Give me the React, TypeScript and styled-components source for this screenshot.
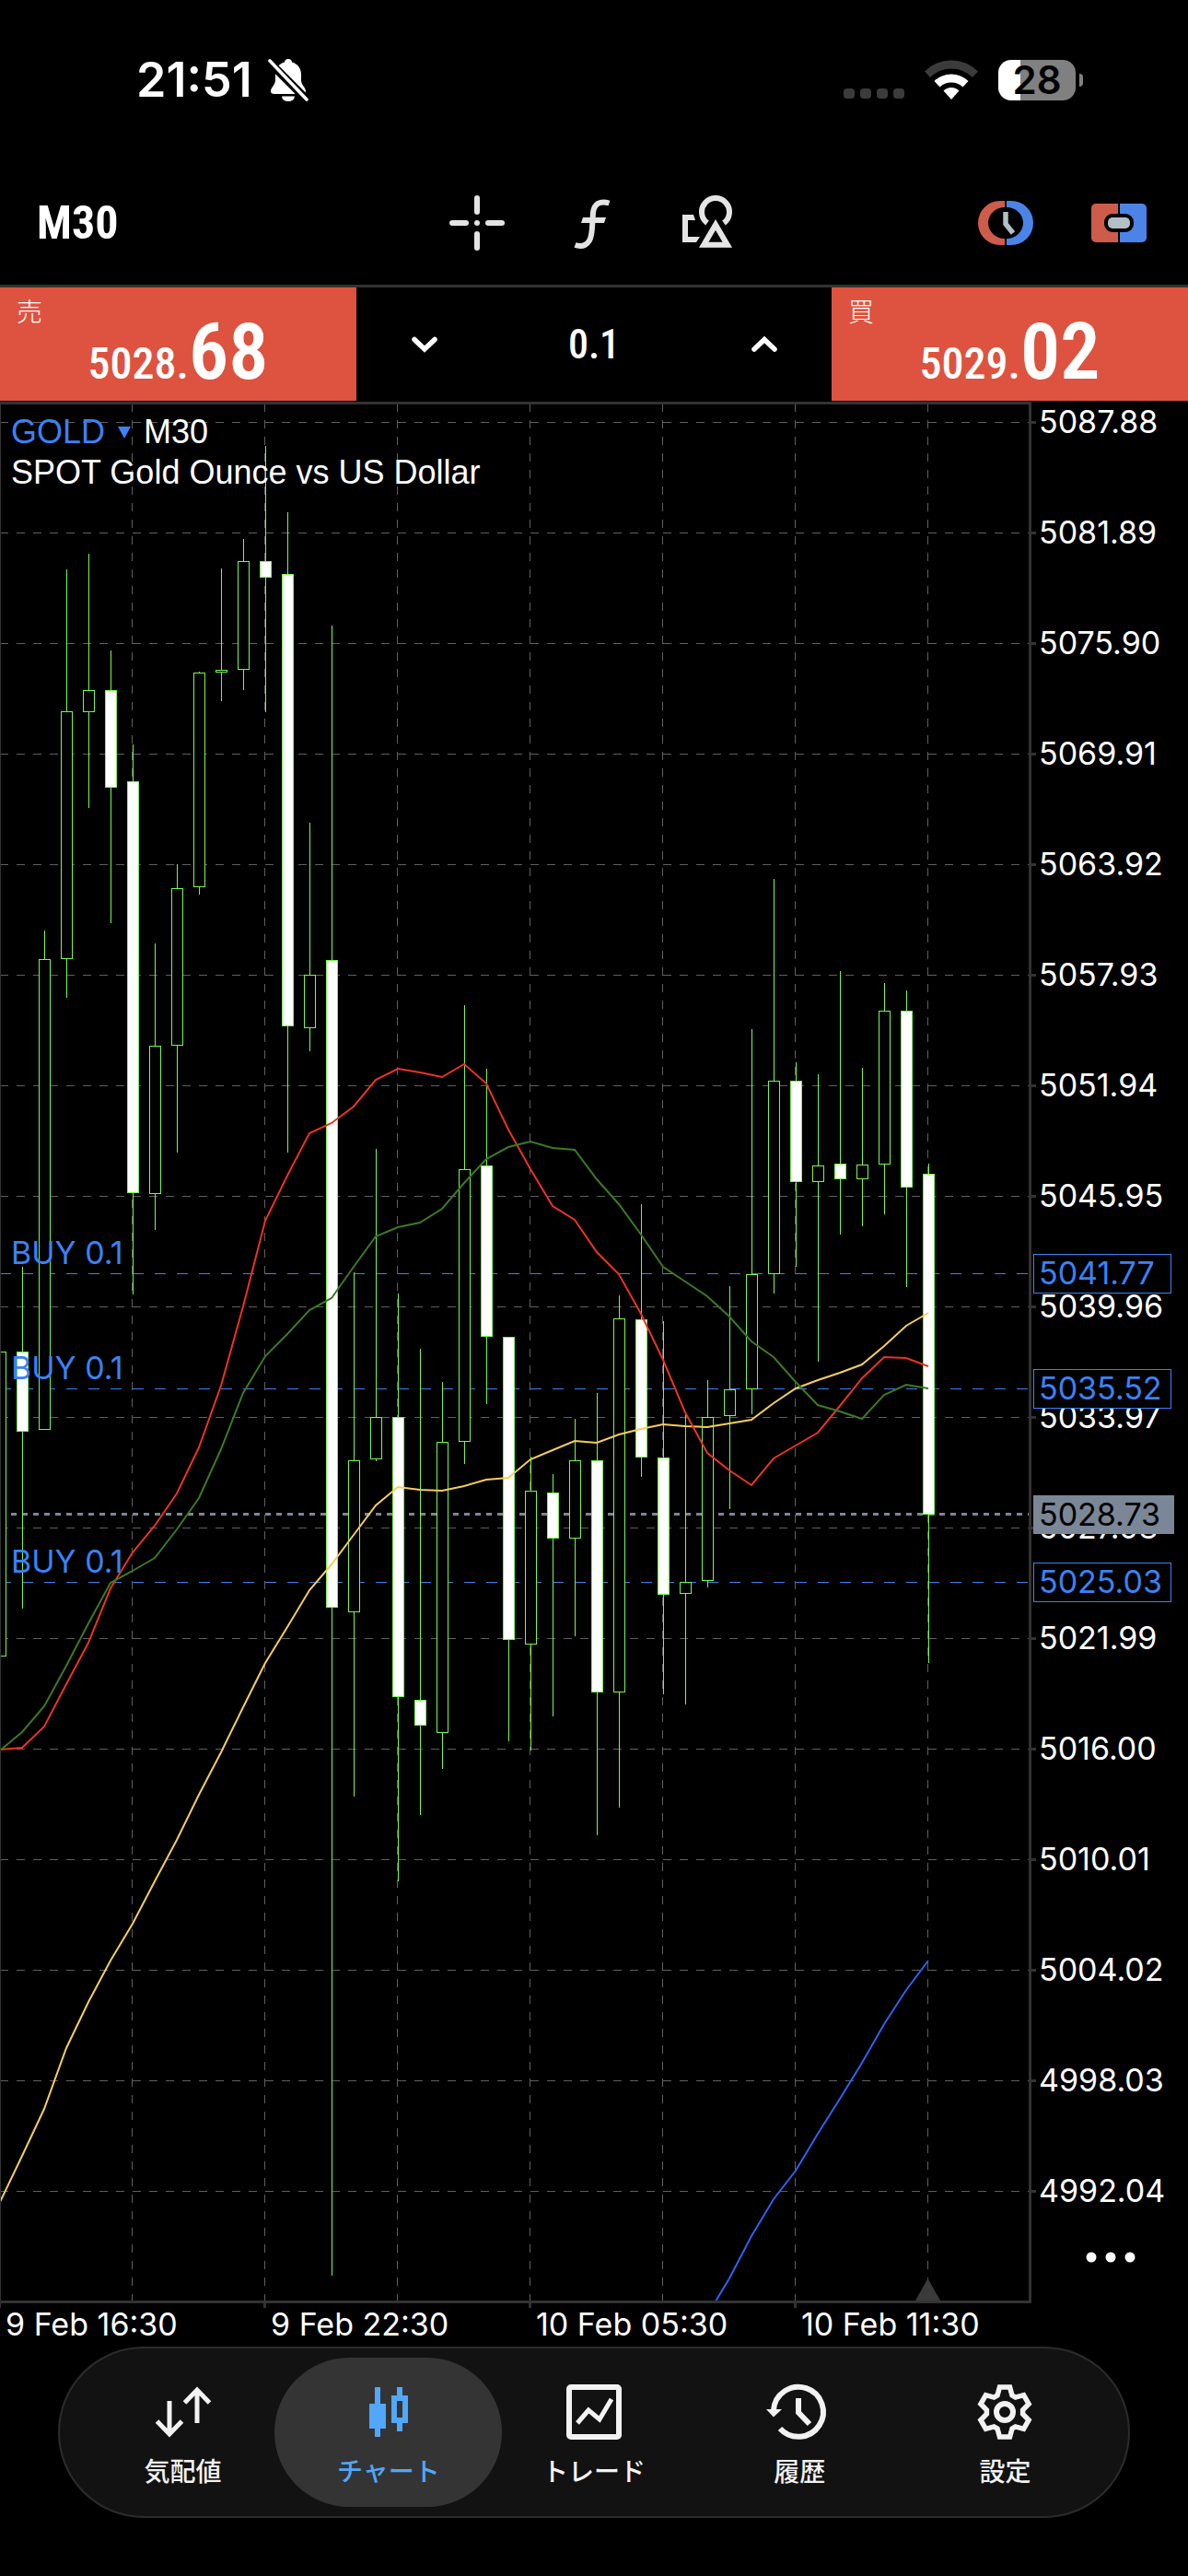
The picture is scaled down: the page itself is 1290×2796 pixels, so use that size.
import React from "react";
import styled, { createGlobalStyle } from "styled-components";

const GlobalStyle = createGlobalStyle`
  *, *::before, *::after { box-sizing: border-box; }
  html, body { margin: 0; background: #000; }
  body { color: #fff; font-family: Inter, "Noto Sans CJK JP", sans-serif; }
  button { border: 0; margin: 0; padding: 0; background: none; color: inherit; font: inherit; cursor: pointer; }
  svg { display: block; flex: none; }
`;

const condensed = `"Roboto Condensed", Roboto, "Noto Sans CJK JP", sans-serif`;

const Screen = styled.main`
  display: flex;
  flex-direction: column;
  min-height: 100vh;
  background: #000;
`;

/* ---------- status bar ---------- */

const StatusBar = styled.header`
  display: flex;
  align-items: center;
  justify-content: space-between;
  height: 174px;
  padding: 0 114px 0 148px;
`;

const StatusGroup = styled.div<{ $gap: number }>`
  display: flex;
  align-items: center;
  gap: ${(p) => p.$gap}px;
`;

const Clock = styled.time`
  font-size: 52px;
  line-height: 60px;
  font-weight: 600;
`;

const Battery = styled.div`
  display: flex;
  align-items: center;
  gap: 4px;
`;

const BatteryCell = styled.span<{ $level: number }>`
  display: grid;
  place-items: center;
  width: 84px;
  height: 44px;
  border-radius: 14px;
  background: linear-gradient(to right, #fff ${(p) => p.$level}%, #808080 ${(p) => p.$level}%);
  color: #000;
  font-size: 42px;
  line-height: 44px;
  font-weight: 600;
`;

const BatteryTip = styled.span`
  width: 4px;
  height: 14px;
  border-radius: 0 4px 4px 0;
  background: #808080;
`;

/* ---------- toolbar ---------- */

const Toolbar = styled.nav`
  display: grid;
  grid-template-columns: 1fr auto 1fr;
  align-items: center;
  height: 138px;
  padding: 0 45px 0 40px;
  border-bottom: 3px solid #333;
`;

const PeriodButton = styled.button`
  justify-self: start;
  font-family: ${condensed};
  font-size: 50px;
  line-height: 60px;
  font-weight: 700;
`;

const ToolGroup = styled.div<{ $gap: number }>`
  display: flex;
  align-items: center;
  justify-self: end;
  gap: ${(p) => p.$gap}px;
  color: #e4e4e4;
`;

/* ---------- one-click trading ---------- */

const TradePanel = styled.section`
  display: grid;
  grid-template-columns: 3fr 4fr 3fr;
  height: 123px;
`;

const QuoteButton = styled.button`
  position: relative;
  display: flex;
  align-items: flex-end;
  justify-content: center;
  background: #dd5340;
  color: #fff;
  font-family: ${condensed};
`;

const QuoteSide = styled.span`
  position: absolute;
  top: 10px;
  left: 18px;
  font-size: 28px;
  line-height: 36px;
  font-weight: 300;
`;

const QuotePrice = styled.span`
  font-size: 48px;
  line-height: 80px;
  font-weight: 500;
`;

const QuotePips = styled.b`
  font-size: 86px;
  font-weight: 600;
`;

const VolumeBox = styled.div`
  display: grid;
  grid-template-columns: 1fr 2fr 1fr;
  align-items: center;
  justify-items: center;
  padding: 0 12px;
`;

const VolumeInput = styled.input`
  width: 100%;
  border: 0;
  padding: 0;
  outline: 0;
  background: none;
  color: #fff;
  text-align: center;
  font-family: ${condensed};
  font-size: 44px;
  line-height: 52px;
  font-weight: 500;
`;

/* ---------- chart ---------- */

const ChartArea = styled.section`
  position: relative;
`;

const ChartSvg = styled.svg`
  width: 100%;
  height: auto;
  font-family: Inter, sans-serif;
  font-size: 34px;
`;

const ChartTitle = styled.div`
  position: absolute;
  top: 12px;
  left: 12px;
  font-family: "Liberation Sans", Arial, sans-serif;
  font-size: 36px;
  line-height: 44px;
`;

const TitleRow = styled.div`
  display: flex;
  align-items: center;
  gap: 14px;
`;

const SymbolButton = styled.button`
  display: flex;
  align-items: center;
  gap: 14px;
  color: #3a82f7;
`;

const MoreButton = styled.button`
  position: absolute;
  right: 47px;
  bottom: 76px;
  padding: 15px 10px;
`;

/* ---------- tab bar ---------- */

const TabBar = styled.nav`
  display: flex;
  margin: 0 63px 63px;
  height: 186px;
  padding: 10px 22px;
  border: 2px solid #2c2c2c;
  border-radius: 93px;
  background: #121212;
`;

const Tab = styled.button<{ $active?: boolean }>`
  flex: 1 1 0;
  margin: 0 -12px;
  padding-top: 6px;
  display: flex;
  flex-direction: column;
  align-items: center;
  justify-content: center;
  gap: 15px;
  border-radius: 81px;
  background: ${(p) => (p.$active ? "#343434" : "transparent")};
  color: ${(p) => (p.$active ? "#51a7f9" : "#f2f2f2")};
  font-family: "Noto Sans CJK JP", sans-serif;
  font-size: 28px;
  line-height: 36px;
  font-weight: 500;
`;

/* ---------- market data, in plot units ---------- */

type Candle = [high: number, top: number, bottom: number, low: number, down: 0 | 1];

const candles: Candle[] = [
  [1467, 1467, 1797, 1797, 0],
  [1375, 1467, 1553, 1746, 1],
  [1010, 1041, 1551, 1551, 0],
  [618, 772, 1040, 1083, 0],
  [601, 749, 772, 877, 0],
  [706, 749, 854, 1002, 1],
  [808, 848, 1294, 1405, 1],
  [1024, 1135, 1295, 1335, 0],
  [938, 964, 1134, 1251, 0],
  [729, 730, 962, 971, 0],
  [617, 727, 729, 761, 0],
  [585, 609, 726, 749, 0],
  [484, 609, 626, 773, 1],
  [556, 623, 1113, 1251, 1],
  [893, 1058, 1115, 1141, 0],
  [679, 1042, 1744, 2470, 1],
  [1381, 1585, 1749, 1950, 0],
  [1247, 1538, 1583, 1586, 0],
  [1404, 1538, 1841, 2042, 1],
  [1464, 1845, 1872, 1970, 1],
  [1500, 1565, 1880, 1920, 0],
  [1091, 1269, 1564, 1589, 0],
  [1160, 1265, 1450, 1524, 1],
  [1451, 1451, 1779, 1890, 1],
  [1581, 1618, 1784, 1900, 0],
  [1600, 1620, 1669, 1863, 1],
  [1540, 1585, 1669, 1776, 0],
  [1512, 1585, 1836, 1992, 1],
  [1406, 1431, 1836, 1962, 0],
  [1307, 1432, 1581, 1603, 1],
  [1434, 1582, 1730, 1839, 1],
  [1535, 1717, 1729, 1850, 0],
  [1498, 1538, 1715, 1723, 0],
  [1396, 1508, 1536, 1638, 0],
  [1117, 1383, 1507, 1535, 0],
  [954, 1173, 1382, 1404, 0],
  [1153, 1173, 1282, 1375, 1],
  [1166, 1265, 1282, 1478, 0],
  [1054, 1263, 1279, 1340, 1],
  [1159, 1264, 1279, 1331, 0],
  [1067, 1097, 1263, 1318, 0],
  [1075, 1097, 1288, 1397, 1],
  [1263, 1274, 1643, 1805, 1],
];

const averages: { color: string; start: number; values: number[] }[] = [
  {
    color: "#f5ce5b",
    start: 0,
    values: [
      2390, 2340, 2289, 2223, 2173, 2128, 2088, 2042, 1997, 1948, 1902, 1853, 1805, 1766, 1726, 1698, 1666, 1634,
      1614, 1617, 1618, 1613, 1606, 1604, 1584, 1574, 1564, 1566, 1557, 1551, 1546, 1548, 1549, 1545, 1541, 1523,
      1507, 1498, 1490, 1481, 1461, 1439, 1425,
    ],
  },
  {
    color: "#ec3323",
    start: 0,
    values: [
      1899, 1897, 1874, 1828, 1783, 1724, 1685, 1656, 1621, 1571, 1504, 1418, 1325, 1276, 1230, 1219, 1201, 1172,
      1160, 1164, 1169, 1155, 1176, 1226, 1269, 1309, 1324, 1359, 1383, 1426, 1476, 1533, 1577, 1596, 1612, 1583,
      1569, 1555, 1526, 1496, 1473, 1474, 1483,
    ],
  },
  {
    color: "#3b7a23",
    start: 0,
    values: [
      1900, 1880, 1852, 1808, 1762, 1718, 1705, 1691, 1660, 1626, 1573, 1512, 1472, 1448, 1422, 1409, 1375, 1342,
      1332, 1327, 1312, 1284, 1258, 1245, 1239, 1246, 1248, 1280, 1307, 1340, 1375, 1391, 1407, 1429, 1456, 1473,
      1500, 1525, 1532, 1540, 1514, 1503, 1507,
    ],
  },
  { color: "#2d63f5", start: 33, values: [2473, 2427, 2387, 2356, 2316, 2278, 2239, 2197, 2160, 2128] },
];

const STEP = 24;
const PLOT = { top: 436, right: 1117, bottom: 2497 };
const TOP_PRICE = 5087.88;
const PRICE_STEP = 5.99;

const candleX = (i: number) => i * STEP + 0.5;
const priceY = (price: number) => Math.round(458 + ((TOP_PRICE - price) * 120) / PRICE_STEP);

const priceTicks = Array.from({ length: 17 }, (_, i) => TOP_PRICE - PRICE_STEP * i);
const timeTicks = Array.from({ length: 7 }, (_, i) => 143.5 + 144 * i);
const dates = ["9 Feb 16:30", "9 Feb 22:30", "10 Feb 05:30", "10 Feb 11:30"];
const orders = [5041.77, 5035.52, 5025.03];
const lastPrice = 5028.73;

function Chart() {
  const lastY = priceY(lastPrice) + 0.5;
  return (
    <ChartSvg viewBox="0 435 1290 2112" role="img" aria-label="GOLD M30">
      <defs>
        <clipPath id="plot">
          <rect x={0} y={PLOT.top} width={PLOT.right} height={PLOT.bottom - PLOT.top} />
        </clipPath>
      </defs>

      <g stroke="#606060" strokeWidth={1} strokeDasharray="9 9">
        {priceTicks.map((p) => (
          <line key={p} x1={0} x2={PLOT.right} y1={priceY(p) + 0.5} y2={priceY(p) + 0.5} />
        ))}
        {timeTicks.map((x) => (
          <line key={x} x1={x} x2={x} y1={438} y2={PLOT.bottom} />
        ))}
      </g>

      {orders.map((p) => (
        <line
          key={p}
          x1={0}
          x2={PLOT.right}
          y1={priceY(p) + 0.5}
          y2={priceY(p) + 0.5}
          stroke="#3a82f7"
          strokeDasharray="12 12"
        />
      ))}
      <line x1={12} x2={PLOT.right} y1={lastY} y2={lastY} stroke="#7b8797" strokeWidth={3} strokeDasharray="6 6" />

      <path d="M994 2497L1007.5 2473L1021 2497Z" fill="#3a3a3a" />

      <g clipPath="url(#plot)">
        {candles.map(([high, top, bottom, low, down], i) => (
          <g key={i} stroke="#75fb4c" strokeWidth={1}>
            <line x1={candleX(i)} x2={candleX(i)} y1={high} y2={low} />
            <rect
              x={candleX(i) - 6}
              y={top + 0.5}
              width={12}
              height={bottom - top}
              fill={down ? "#fff" : "#000"}
            />
          </g>
        ))}
        {averages.map((a) => (
          <polyline
            key={a.color}
            points={a.values.map((y, i) => `${(a.start + i) * STEP},${y}`).join(" ")}
            fill="none"
            stroke={a.color}
            strokeWidth={2}
          />
        ))}
        <path d="M777.5 2497L792 2473" stroke="#2d63f5" strokeWidth={2} />
      </g>

      <g fill="#3a82f7">
        {orders.map((p) => (
          <text key={p} x={12} y={priceY(p) - 10}>
            BUY 0.1
          </text>
        ))}
      </g>

      <g fill="#333">
        <rect x={0} y={436} width={1120} height={3} />
        <rect x={0} y={436} width={1} height={2064} />
        <rect x={1117} y={436} width={3} height={2064} />
        <rect x={0} y={2497} width={1120} height={3} />
        {priceTicks.map((p) => (
          <rect key={p} x={1120} y={priceY(p) - 1} width={5} height={3} />
        ))}
        {dates.map((d, i) => (
          <rect key={d} x={i * 288 - 2} y={2500} width={3} height={5} />
        ))}
      </g>

      <g fill="#fff">
        {priceTicks.map((p) => (
          <text key={p} x={1128} y={priceY(p) + 12}>
            {p.toFixed(2)}
          </text>
        ))}
        {dates.map((d, i) => (
          <text key={d} x={i * 288 + 6} y={2535}>
            {d}
          </text>
        ))}
      </g>

      {orders.map((p) => (
        <g key={p}>
          <rect x={1122.5} y={priceY(p) - 20.5} width={149} height={42} fill="#000" stroke="#3a82f7" />
          <text x={1128} y={priceY(p) + 12} fill="#3a82f7">
            {p.toFixed(2)}
          </text>
        </g>
      ))}
      <rect x={1122} y={lastY - 20.5} width={153} height={42} fill="#7b8797" />
      <text x={1128} y={lastY + 12.5} fill="#000">
        {lastPrice.toFixed(2)}
      </text>
    </ChartSvg>
  );
}

/* ---------- icons ---------- */

const BellOff = () => (
  <svg width="44" height="48" viewBox="0 0 44 48">
    <path
      d="M22 1c-2.5 0-4 1.800-4 3.600C11.5 6.400 8 11.500 8 18v6c0 5-5 8-5 12 0 2 1.500 3 3.500 3h31c2 0 3.500-1 3.500-3 0-4-5-7-5-12v-6c0-6.500-3.500-11.600-10-13.400C26 2.800 24.500 1 22 1Z"
      fill="#fff"
    />
    <path d="M15 41.500a7 5.500 0 0 0 14 0Z" fill="#fff" />
    <path d="M2 5L42 45" stroke="#000" strokeWidth="9" />
    <path d="M2 3L42 45" stroke="#fff" strokeWidth="3.600" strokeLinecap="round" />
  </svg>
);

const Signal = () => (
  <svg width="66" height="44" viewBox="0 0 66 44">
    {[0, 18, 36, 54].map((x) => (
      <rect key={x} x={x} y={31} width={12} height={11} rx={4} fill="#3b3b3b" />
    ))}
  </svg>
);

const Wifi = () => (
  <svg width="58" height="44" viewBox="0 0 58 44">
    <path d="M0 12.500a41 41 0 0 1 58 0l-6 6.500a32.500 32.500 0 0 0-46 0Z" fill="#3b3b3b" />
    <path d="M10.500 23a26.500 26.500 0 0 1 37 0l-6 6.500a18 18 0 0 0-25 0Z" fill="#fff" />
    <path d="M20.500 33.500a12 12 0 0 1 17 0L29 43Z" fill="#fff" />
  </svg>
);

const Crosshair = () => (
  <svg width="60" height="60" viewBox="0 0 60 60">
    <path
      d="M30 3v15M30 42v15M3 30h15M42 30h15"
      stroke="currentColor"
      strokeWidth="6"
      strokeLinecap="round"
    />
    <circle cx="30" cy="30" r="3" fill="currentColor" />
  </svg>
);

const FunctionIcon = () => (
  <svg width="60" height="60" viewBox="0 0 60 60" fill="none">
    <path
      d="M48.500 8.500C38.500 5.500 32 9 31 19C30 30 30.500 36 29 43C27 54.500 19 56.500 11.500 54"
      stroke="currentColor"
      strokeWidth="6"
    />
    <path d="M20 24h25l-2 6H18Z" fill="currentColor" />
  </svg>
);

const ShapesIcon = () => (
  <svg width="60" height="60" viewBox="0 0 60 60" fill="none" stroke="currentColor" strokeWidth="6">
    <path d="M30 30A15 15 0 1 1 48 30" />
    <path d="M39 32L26.200 53.700H51.800Z" />
    <path d="M3 21H15L17 27H9V45H22L18 51H3Z" fill="currentColor" stroke="none" />
  </svg>
);

const SessionIcon = () => (
  <svg width="60" height="48" viewBox="0 0 60 48" fill="none">
    <path d="M29 0V7A18 17 0 0 0 29 41V48H24A24 24 0 0 1 24 0Z" fill="#cd5c4b" />
    <path d="M31 0V7A18 17 0 0 1 31 41V48H36A24 24 0 0 0 36 0Z" fill="#4b84e6" />
    <path d="M30 12V25L38 35" stroke="#b2bfc6" strokeWidth="5.500" />
  </svg>
);

const OneClickIcon = () => (
  <svg width="60" height="42" viewBox="0 0 60 42">
    <path d="M5 0H29V42H5a5 5 0 0 1-5-5V5a5 5 0 0 1 5-5Z" fill="#cd5c4b" />
    <path d="M31 0H55a5 5 0 0 1 5 5V37a5 5 0 0 1-5 5H31Z" fill="#4b84e6" />
    <rect x="14" y="11" width="32" height="20" rx="9" fill="#000" />
    <rect x="18" y="15" width="24" height="12" rx="5" fill="#b2bfc6" />
  </svg>
);

const Chevron = ({ up }: { up?: boolean }) => (
  <svg width="30" height="20" viewBox="0 0 30 20" fill="none">
    <path
      d={up ? "M4 15L15 4.500L26 15" : "M4 4.500L15 15L26 4.500"}
      stroke="#fff"
      strokeWidth="5.500"
      strokeLinecap="round"
    />
  </svg>
);

const Caret = () => (
  <svg width="14" height="14" viewBox="0 0 14 14">
    <path d="M0 1H14L7 14Z" fill="currentColor" />
  </svg>
);

const Dots = () => (
  <svg width="54" height="12" viewBox="0 0 54 12" fill="#fff">
    <circle cx="6" cy="6" r="5.500" />
    <circle cx="27" cy="6" r="5.500" />
    <circle cx="48" cy="6" r="5.500" />
  </svg>
);

const QuotesIcon = () => (
  <svg width="64" height="60" viewBox="0 0 64 60" fill="none" stroke="currentColor" strokeWidth="5">
    <path d="M17 18V54M3.500 40L17 54L30.500 40" />
    <path d="M47 42V6M33.500 20L47 6L60.500 20" />
  </svg>
);

const CandlesIcon = () => (
  <svg width="64" height="60" viewBox="0 0 64 60" fill="currentColor">
    <path d="M17 3h6v18h6v27h-6v9h-6v-9h-6V21h6Z" />
    <path fillRule="evenodd" d="M41 3h6v9h6v30h-6v9h-6v-9h-6V12h6ZM41 18v18h6V18Z" />
  </svg>
);

const TradeIcon = () => (
  <svg width="64" height="60" viewBox="0 0 64 60" fill="none" stroke="currentColor" strokeWidth="6">
    <rect x="5" y="3" width="54" height="54" rx="2" />
    <path d="M14 42L26 28L38 38L51 16" strokeWidth="5" />
  </svg>
);

const HistoryIcon = () => (
  <svg width="64" height="60" viewBox="0 0 64 60" fill="none" overflow="visible">
    <path d="M4 28A27 27 0 1 1 11 48" stroke="currentColor" strokeWidth="6" />
    <path d="M-4 27H13L4 35.500Z" fill="currentColor" />
    <path d="M31 15V30.500L43 43" stroke="currentColor" strokeWidth="6" />
  </svg>
);

const gearPath = (() => {
  const tooth = [
    [-8, -18],
    [-5.5, -27],
    [5.5, -27],
    [8, -18],
  ];
  const points: string[] = [];
  for (let k = 0; k < 6; k++) {
    const a = (k * Math.PI) / 3;
    for (const [x, y] of tooth) {
      const px = 32 + x * Math.cos(a) - y * Math.sin(a);
      const py = 30 + x * Math.sin(a) + y * Math.cos(a);
      points.push(`${px.toFixed(1)} ${py.toFixed(1)}`);
    }
  }
  return `M${points.join("L")}Z`;
})();

const GearIcon = () => (
  <svg width="64" height="60" viewBox="0 0 64 60" fill="none" stroke="currentColor">
    <path d={gearPath} strokeWidth="5.500" />
    <circle cx="32" cy="30" r="9" strokeWidth="6" />
  </svg>
);

const tabs = [
  { label: "気配値", Icon: QuotesIcon },
  { label: "チャート", Icon: CandlesIcon },
  { label: "トレード", Icon: TradeIcon },
  { label: "履歴", Icon: HistoryIcon },
  { label: "設定", Icon: GearIcon },
];

export default function App() {
  const [volume, setVolume] = React.useState("0.1");
  const [active, setActive] = React.useState("チャート");
  const bump = (d: number) => setVolume((v) => String(Math.max(0, Math.round((Number(v) + d) * 10) / 10)));

  return (
    <Screen>
      <GlobalStyle />
      <StatusBar>
        <StatusGroup $gap={17}>
          <Clock>21:51</Clock>
          <BellOff />
        </StatusGroup>
        <StatusGroup $gap={22}>
          <Signal />
          <Wifi />
          <Battery>
            <BatteryCell $level={28}>28</BatteryCell>
            <BatteryTip />
          </Battery>
        </StatusGroup>
      </StatusBar>

      <Toolbar>
        <PeriodButton>M30</PeriodButton>
        <ToolGroup $gap={65}>
          <button aria-label="Crosshair">
            <Crosshair />
          </button>
          <button aria-label="Indicators">
            <FunctionIcon />
          </button>
          <button aria-label="Objects">
            <ShapesIcon />
          </button>
        </ToolGroup>
        <ToolGroup $gap={63}>
          <button aria-label="Sessions">
            <SessionIcon />
          </button>
          <button aria-label="One-click trading">
            <OneClickIcon />
          </button>
        </ToolGroup>
      </Toolbar>

      <TradePanel>
        <QuoteButton>
          <QuoteSide>売</QuoteSide>
          <QuotePrice>
            5028.<QuotePips>68</QuotePips>
          </QuotePrice>
        </QuoteButton>
        <VolumeBox>
          <button aria-label="Decrease volume" onClick={() => bump(-0.1)}>
            <Chevron />
          </button>
          <VolumeInput
            aria-label="Volume"
            inputMode="decimal"
            value={volume}
            onChange={(e) => setVolume(e.target.value)}
          />
          <button aria-label="Increase volume" onClick={() => bump(0.1)}>
            <Chevron up />
          </button>
        </VolumeBox>
        <QuoteButton>
          <QuoteSide>買</QuoteSide>
          <QuotePrice>
            5029.<QuotePips>02</QuotePips>
          </QuotePrice>
        </QuoteButton>
      </TradePanel>

      <ChartArea>
        <Chart />
        <ChartTitle>
          <TitleRow>
            <SymbolButton>
              GOLD
              <Caret />
            </SymbolButton>
            <span>M30</span>
          </TitleRow>
          <div>SPOT Gold Ounce vs US Dollar</div>
        </ChartTitle>
        <MoreButton aria-label="More">
          <Dots />
        </MoreButton>
      </ChartArea>

      <TabBar>
        {tabs.map(({ label, Icon }) => (
          <Tab key={label} $active={label === active} onClick={() => setActive(label)}>
            <Icon />
            {label}
          </Tab>
        ))}
      </TabBar>
    </Screen>
  );
}
